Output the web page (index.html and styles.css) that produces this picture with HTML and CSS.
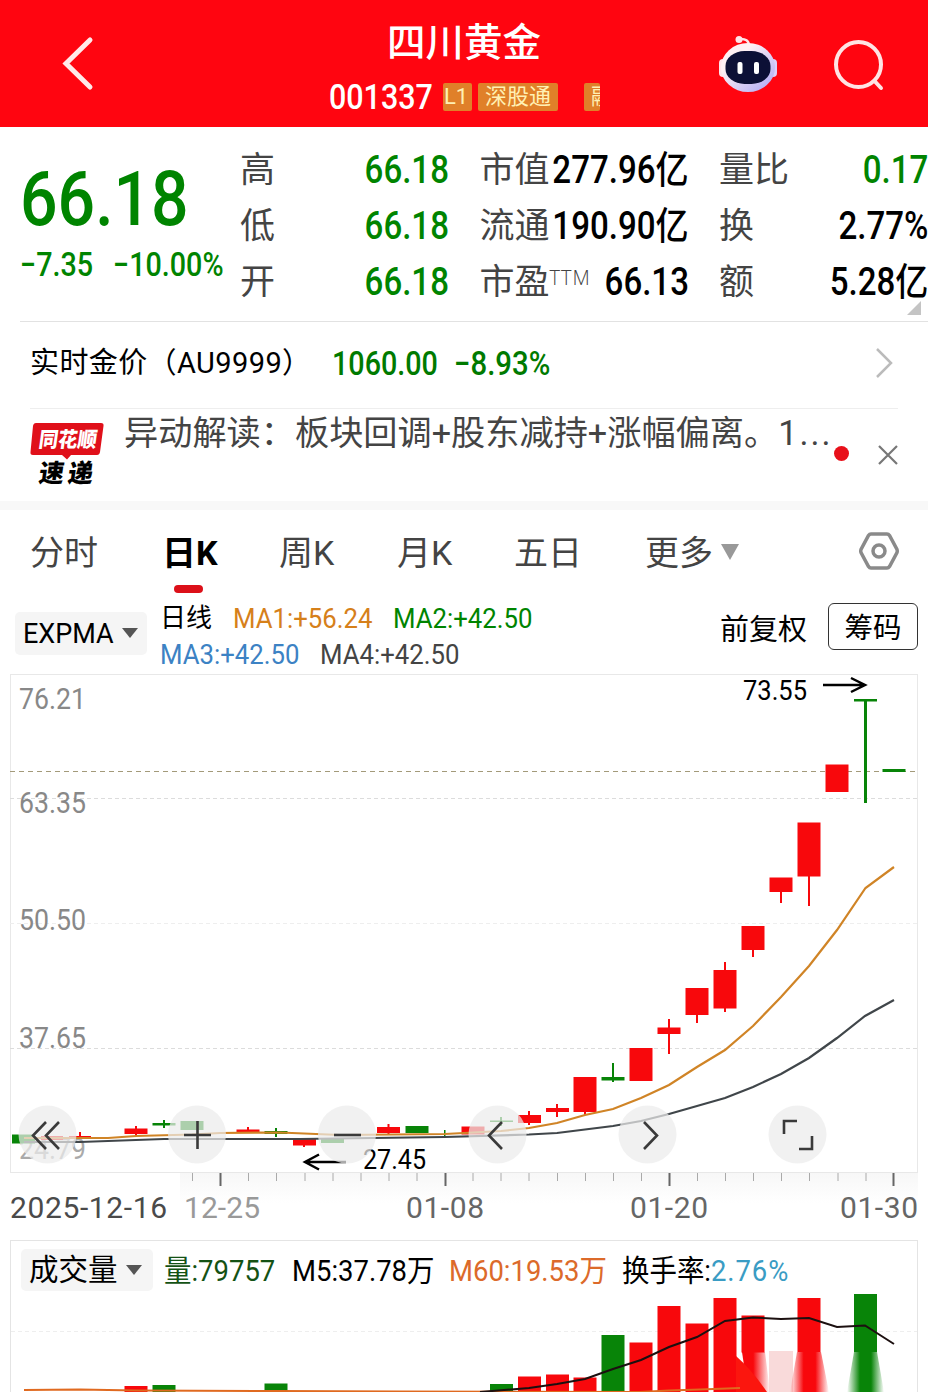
FILE: index.html
```html
<!DOCTYPE html>
<html lang="zh-CN">
<head>
    <meta charset="UTF-8">
    <meta name="viewport" content="width=device-width, initial-scale=1.0">
    <title>四川黄金 001337</title>
    <link rel="stylesheet" href="styles.css">
</head>
<body>
    <!-- Header -->
    <header class="header">
        <svg class="back" width="32" height="56" viewBox="0 0 32 56"><path d="M28 4L4 27.500L28 51" /></svg>
        <div class="title">
            <h1>四川黄金</h1>
            <div class="code-row">
                <span class="code num">001337</span>
                <span class="tag tag-level">L1</span>
                <span class="tag">深股通</span>
                <span class="tag tag-cut">融</span>
            </div>
        </div>
        <svg class="robot" width="60" height="60" viewBox="0 0 60 60">
            <defs>
                <linearGradient id="head" x1="0" y1="0" x2="1" y2="1">
                    <stop offset="0.3" stop-color="#fff0f4" />
                    <stop offset="1" stop-color="#a9a4f5" />
                </linearGradient>
            </defs>
            <path d="M21 4Q31 3 31 11" fill="none" stroke="#ffe4e8" stroke-width="2.500" />
            <circle cx="21" cy="4.500" r="3.500" fill="#ffe4e8" />
            <rect x="1" y="24" width="8" height="18" rx="4" fill="#ffe4ea" />
            <rect x="51" y="24" width="8" height="18" rx="4" fill="#dccffa" />
            <ellipse cx="30" cy="32.500" rx="27" ry="24.500" fill="url(#head)" />
            <rect x="7.500" y="16" width="45" height="33" rx="19" ry="15" fill="#0c1036" />
            <rect x="19.500" y="27" width="5" height="12" rx="2" fill="#fff" />
            <rect x="36" y="27" width="5" height="12" rx="2" fill="#fff" />
        </svg>
        <svg class="search" width="52" height="54" viewBox="0 0 52 54">
            <circle cx="25.500" cy="26.500" r="22.500" />
            <path d="M41.500 43L48 50" />
        </svg>
    </header>

    <!-- Quote -->
    <section class="quote">
        <div class="price">
            <div class="price-now num">66.18</div>
            <div class="price-change">
                <span class="num">−7.35</span>
                <span class="num">−10.00%</span>
            </div>
        </div>
        <div class="stats">
            <div class="stat"><span>高</span><b class="num green">66.18</b></div>
            <div class="stat"><span>市值</span><b class="num">277.96亿</b></div>
            <div class="stat"><span>量比</span><b class="num green">0.17</b></div>
            <div class="stat"><span>低</span><b class="num green">66.18</b></div>
            <div class="stat"><span>流通</span><b class="num">190.90亿</b></div>
            <div class="stat"><span>换</span><b class="num">2.77%</b></div>
            <div class="stat"><span>开</span><b class="num green">66.18</b></div>
            <div class="stat"><span>市盈<sup>TTM</sup></span><b class="num">66.13</b></div>
            <div class="stat"><span>额</span><b class="num">5.28亿</b></div>
        </div>
        <i class="corner"></i>
    </section>

    <!-- Gold price -->
    <section class="gold">
        <span class="gold-name">实时金价（AU9999）</span>
        <span class="gold-price num">1060.00</span>
        <span class="gold-change num">−8.93%</span>
        <svg class="more" width="18" height="32" viewBox="0 0 18 32"><path d="M2 2L16 16L2 30" /></svg>
    </section>

    <!-- News -->
    <section class="news">
        <svg class="logo" width="76" height="72" viewBox="0 0 76 72">
            <path d="M6 3H71Q74 3 73.500 6L70 32Q69.500 35 67 35H41L37 39.500L32 35H3Q0 35 0.500 32L3 6Q3.500 3 6 3Z" fill="#e0101a" />
            <text class="logo-top" transform="translate(8 27) skewX(-8)" textLength="58" lengthAdjust="spacingAndGlyphs">同花顺</text>
            <text class="logo-bottom" transform="translate(8 62) skewX(-8)" textLength="54">速递</text>
        </svg>
        <p class="news-text">异动解读：板块回调+股东减持+涨幅偏离。<span class="news-tail">1...</span></p>
        <i class="dot"></i>
        <svg class="close" width="22" height="22" viewBox="0 0 22 22"><path d="M2 2L20 20M20 2L2 20" /></svg>
    </section>

    <!-- Period tabs -->
    <nav class="tabs">
        <span>分时</span>
        <span class="active">日K</span>
        <span>周K</span>
        <span>月K</span>
        <span>五日</span>
        <span>更多<i class="caret"></i></span>
        <svg width="40" height="40" viewBox="0 0 40 40">
            <path d="M12 3H28Q29.500 3 30.500 4.500L38 18.500Q38.500 20 38 21.500L30.500 35.500Q29.500 37 28 37H12Q10.500 37 9.500 35.500L2 21.500Q1.500 20 2 18.500L9.500 4.500Q10.500 3 12 3Z" />
            <circle cx="20" cy="20" r="6" />
        </svg>
    </nav>

    <!-- Indicator row -->
    <section class="indicator">
        <span class="pill">EXPMA<i class="caret"></i></span>
        <div class="ma">
            <div class="ma-row">
                <span class="ma-name">日线</span>
                <span class="num orange">MA1:+56.24</span>
                <span class="num green">MA2:+42.50</span>
            </div>
            <div class="ma-row">
                <span class="num blue">MA3:+42.50</span>
                <span class="num gray">MA4:+42.50</span>
            </div>
        </div>
        <span class="adjust">前复权</span>
        <span class="chips">筹码</span>
    </section>

    <!-- Candle chart -->
    <svg class="chart" width="928" height="566" viewBox="0 674 928 566">
        <defs>
            <linearGradient id="shade" x1="0" y1="0" x2="0" y2="1">
                <stop offset="0" stop-color="#f7f7f7" />
                <stop offset="1" stop-color="#fff" />
            </linearGradient>
        </defs>
        <rect x="180" y="1173" width="738" height="30" fill="url(#shade)" />
        <rect class="frame" x="10.500" y="674.500" width="907" height="498" />
        <path class="grid" d="M10 798.500H917M10 1048.500H917" />
        <path class="grid light" d="M10 923.500H917" />
        <path class="now" d="M10 771.500H917" />

        <g class="axis">
            <text x="19" y="709" textLength="67" lengthAdjust="spacingAndGlyphs">76.21</text>
            <text x="19" y="813" textLength="67" lengthAdjust="spacingAndGlyphs">63.35</text>
            <text x="19" y="930" textLength="67" lengthAdjust="spacingAndGlyphs">50.50</text>
            <text x="19" y="1048" textLength="67" lengthAdjust="spacingAndGlyphs">37.65</text>
            <text class="faint" x="19" y="1159" textLength="67" lengthAdjust="spacingAndGlyphs">24.79</text>
        </g>

        <g class="up">
            <path d="M41 1136h22v4h-22zM69 1136h22v2h-22zM79 1132h2v7h-2z" />
            <path d="M124.500 1128.500h23v5.500h-23zM135 1126h2v11h-2z" />
            <path d="M236.500 1129.500h23v2.500h-23zM247 1127h2v5h-2z" />
            <path d="M293 1139h23v6.500h-23zM303 1139h2v8h-2z" />
            <path d="M377 1127h23v6h-23zM387.500 1124h2v11h-2z" />
            <path d="M461.500 1126.500h23v8h-23z" />
            <path d="M518 1115h23v8h-23zM528 1111h2v14h-2z" />
            <path d="M546 1108h23v4h-23zM556 1104h2v13h-2z" />
            <path d="M573.500 1077h23v35h-23zM584 1077h2v38h-2z" />
            <path d="M629.500 1048h23v33h-23z" />
            <path d="M657.500 1027.500h23v6.500h-23zM668 1019h2v35h-2z" />
            <path d="M685.500 988h23v27h-23zM696 988h2v35h-2z" />
            <path d="M713.500 970h23v38.500h-23zM724 962h2v50h-2z" />
            <path d="M741.500 926h23v24h-23zM752 926h2v31h-2z" />
            <path d="M769.500 877.500h23v14.500h-23zM780 878h2v25h-2z" />
            <path d="M797.500 822.500h23v54h-23zM808 823h2v83h-2z" />
            <path d="M825.500 764.500h23v27.500h-23z" />
        </g>
        <g class="down">
            <path d="M12 1134.500h23v9h-23z" />
            <path d="M152.500 1123h23v2.500h-23zM163 1120h2v8h-2z" />
            <path d="M180.500 1121h23v9h-23z" />
            <path d="M264.500 1131h23v3h-23zM275 1128h2v9h-2z" />
            <path d="M321 1139h23v4h-23z" />
            <path d="M405.500 1126h23v7h-23z" />
            <path d="M444 1130h1.500v8h-1.500z" />
            <path d="M490 1120.500h23v1.500h-23zM500 1117h2v9h-2z" />
            <path d="M601.500 1077h23v3.500h-23zM612 1063h2v19h-2z" />
            <path d="M854 699h23v2.500h-23zM864 700h3v103h-3z" />
            <path d="M882.500 769h23v3h-23z" />
        </g>

        <polyline class="ma-slow" points="24,1142 80,1142 164,1139 300,1139 445,1137 529,1134.500 557,1133 585,1129.500 613,1126 641,1121 669,1114 697,1106 725,1098 753,1087 781,1074 809,1058 837,1038 865,1016 894,1000" />
        <polyline class="ma-fast" points="24,1138 108,1138 136,1136 192,1134.500 220,1133 280,1132.500 340,1135 445,1134 501,1131 529,1128 557,1123 585,1115 613,1109 641,1098 669,1085 697,1067 725,1050 753,1026 781,997 809,966 837,930 865.500,888 894,867" />

        <g class="mark">
            <text x="743" y="700" textLength="64" lengthAdjust="spacingAndGlyphs">73.55</text>
            <path d="M823 685H864M851 678L865 685L851 692" />
            <text x="363" y="1169" textLength="63" lengthAdjust="spacingAndGlyphs">27.45</text>
            <path d="M346 1162H306M319 1154.500L305 1162L319 1169.500" />
        </g>

        <!-- Chart controls -->
        <g class="controls">
            <circle cx="47.500" cy="1134.500" r="29" />
            <circle cx="197" cy="1134.500" r="29" />
            <circle cx="347" cy="1134.500" r="29" />
            <circle cx="497.500" cy="1134.500" r="29" />
            <circle cx="647.500" cy="1134.500" r="29" />
            <circle cx="797.500" cy="1134.500" r="29" />
            <path d="M46 1122L33 1135.500L46 1149M59 1122L46 1135.500L59 1149" />
            <path d="M184 1135H211M197.500 1121V1149" />
            <path d="M334 1135H361" />
            <path d="M502 1122L489 1135.500L502 1149" />
            <path d="M644 1122L657 1135.500L644 1149" />
            <path d="M784 1134V1121H797M812 1136V1149H799" />
        </g>

        <path class="tick" d="M192.500 1173v8M248.500 1173v8M276.500 1173v8M305 1173v8M333 1173v8M361 1173v8M389 1173v8M417 1173v8M473 1173v8M501 1173v8M529 1173v8M557.500 1173v8M585.500 1173v8M613.500 1173v8M641.500 1173v8M697.500 1173v8M725.500 1173v8M753.500 1173v8M781.500 1173v8M809.500 1173v8M838 1173v8M866 1173v8" />
        <path class="tick major" d="M220.500 1173v13M445.500 1173v13M669.500 1173v13M893.500 1173v13" />
        <g class="dates">
            <text class="first" x="10" y="1218" textLength="157">2025-12-16</text>
            <text class="faint" x="184" y="1218" textLength="76">12-25</text>
            <text x="406" y="1218" textLength="78">01-08</text>
            <text x="630" y="1218" textLength="78">01-20</text>
            <text x="840" y="1218" textLength="78">01-30</text>
        </g>
    </svg>

    <!-- Volume -->
    <section class="volume">
        <div class="volume-head">
            <span class="pill">成交量<i class="caret"></i></span>
            <span class="num dark-green">量:79757</span>
            <span class="num">M5:37.78万</span>
            <span class="num deep-orange">M60:19.53万</span>
            <span class="num">换手率:<span class="cyan">2.76%</span></span>
        </div>
        <svg class="bars" width="906" height="98" viewBox="11 1294 906 98">
            <defs>
                <linearGradient id="red-fade">
                    <stop offset="0" stop-color="#f8080c" stop-opacity="0" />
                    <stop offset="0.350" stop-color="#f8080c" />
                    <stop offset="0.650" stop-color="#f8080c" />
                    <stop offset="1" stop-color="#f8080c" stop-opacity="0" />
                </linearGradient>
                <linearGradient id="green-fade">
                    <stop offset="0" stop-color="#088408" stop-opacity="0" />
                    <stop offset="0.350" stop-color="#088408" />
                    <stop offset="0.650" stop-color="#088408" />
                    <stop offset="1" stop-color="#088408" stop-opacity="0" />
                </linearGradient>
                <linearGradient id="right-fade">
                    <stop offset="0.400" stop-color="#f8080c" />
                    <stop offset="1" stop-color="#f8080c" stop-opacity="0" />
                </linearGradient>
            </defs>
            <path class="grid light" d="M11 1331.500H917" />
            <path class="up" d="M124.500 1386h23v6h-23zM518 1376.500h23v16h-23zM546 1374.500h23v18h-23zM573.500 1377.500h23v15h-23zM629.500 1342.500h23v50h-23zM657.500 1306h23v86h-23zM685.500 1323.500h23v69h-23zM713.500 1298h23v94h-23zM741.500 1315.500h23v37h-23zM797.500 1298h23v54h-23z" />
            <path class="down" d="M152.500 1385h23v7h-23zM264.500 1383.500h23v9h-23zM490 1384h23v8h-23zM601.500 1335h23v57h-23zM854 1294h23v58h-23z" />
            <rect x="769" y="1351" width="24" height="41" fill="#f9dada" />
            <path d="M742 1352H765L770 1392H748Z" fill="url(#right-fade)" />
            <path d="M736 1356Q752 1370 767 1392H736Z" fill="#fb160e" />
            <path d="M797 1352H821L829 1392H790Z" fill="url(#red-fade)" />
            <path d="M854 1352H877L884 1392H847Z" fill="url(#green-fade)" />
            <polyline class="vol-slow" points="24,1390 80,1389.500 136,1390.500 276,1391 400,1391.500 640,1392 669,1390.500 700,1389.500 740,1388" />
            <polyline class="vol-fast" points="480,1392 529,1388 557,1384 585,1379 613,1369 641,1360 669,1347 697,1337 725,1321 753,1317.500 781,1319 809,1318 837,1327 865,1325.500 894,1344" />
        </svg>
    </section>
</body>
</html>
```

FILE: styles.css
```css
* {
    box-sizing: border-box;
}

body {
    width: 928px;
    height: 1392px;
    margin: 0;
    overflow: hidden;
    background-color: #fff;
    color: #000;
    font-family: Roboto, "Noto Sans CJK SC", sans-serif;
}

svg {
    display: block;
    flex: none;
}

i {
    display: block;
    flex: none;
}

/* Narrow figures */
.num {
    display: inline-block;
    white-space: nowrap;
    transform: scaleX(0.87);
    transform-origin: left center;
}

.green { color: #008400; }
.orange { color: #d6801a; }
.blue { color: #3c82c4; }
.gray { color: #444; }
.dark-green { color: #145214; }
.deep-orange { color: #dc6a2a; }
.cyan { color: #3a9cc4; }

/* Header */
.header {
    display: flex;
    height: 127px;
    background-color: #ff0510;
    color: #fff;
}

.back {
    margin: 36px 0 0 62px;
    fill: none;
    stroke: #ffeaea;
    stroke-width: 5;
    stroke-linecap: round;
}

.title {
    width: 390px;
    margin-left: 235px;
}

h1 {
    margin: 19px 0 0 58px;
    font-size: 38.5px;
    font-weight: 500;
    line-height: 48px;
}

.code-row {
    display: flex;
    align-items: center;
    height: 30px;
    margin-top: 15px;
}

.code {
    width: 114px;
    font-size: 35px;
    font-weight: 500;
}

.tag {
    height: 28px;
    margin-right: 6px;
    padding: 0 7px;
    border-radius: 2px;
    background-color: #e08029;
    color: #fff0b4;
    font-size: 22px;
    line-height: 28px;
    white-space: nowrap;
    overflow: hidden;
}

.tag-level {
    width: 29px;
    padding: 0 1px;
}

.tag-cut {
    width: 16px;
    margin-left: 20px;
}

.robot {
    margin: 35px 0 0 -1px;
}

.search {
    margin: 38px 0 0 55px;
    fill: none;
    stroke: #ffe4e4;
    stroke-width: 4;
    stroke-linecap: round;
}

/* Quote */
.quote {
    display: flex;
    position: relative;
    height: 195px;
    padding-top: 15px;
}

.quote::after {
    content: "";
    position: absolute;
    left: 20px;
    right: 0;
    bottom: 0;
    height: 1px;
    background-color: #e2e2e2;
}

.price {
    width: 240px;
    padding-left: 20px;
    color: #008400;
}

.price-now {
    margin-top: 13px;
    font-size: 76px;
    font-weight: 500;
    line-height: 88px;
}

.price-change {
    display: grid;
    grid-template-columns: 93px auto;
    font-size: 33px;
    font-weight: 500;
    line-height: 44px;
}

.stats {
    display: grid;
    grid-template-columns: 209px 209px 209px;
    grid-auto-rows: 56px;
    column-gap: 30.500px;
}

.stat {
    display: flex;
    justify-content: space-between;
    color: #444;
    font-size: 35px;
    line-height: 57px;
    white-space: nowrap;
}

.stat > span {
    width: 70px;
}

.stat b {
    margin-left: -30px;
    color: #000;
    font-size: 38px;
    font-weight: 500;
    transform-origin: right center;
}

.stat b.green {
    color: #008400;
}

sup {
    font-family: "Open Sans", sans-serif;
    font-size: 20px;
    font-weight: 300;
    letter-spacing: 1px;
    line-height: 0;
    vertical-align: 9px;
}

.corner {
    position: absolute;
    right: 7px;
    bottom: 7px;
    border-left: 14px solid transparent;
    border-bottom: 14px solid #c4c4c4;
}

/* Gold price */
.gold {
    display: flex;
    align-items: center;
    height: 87px;
    margin: 0 30px;
    padding-bottom: 4px;
    border-bottom: 1px solid #eee;
    font-size: 29px;
}

.gold-name {
    width: 302px;
    padding-bottom: 6px;
    letter-spacing: 0.4px;
    white-space: nowrap;
}

.gold-price,
.gold-change {
    color: #007a00;
    font-size: 33px;
    font-weight: 500;
}

.gold-price {
    width: 122px;
}

.gold-change {
    transform: scaleX(0.89);
}

.more {
    margin-left: auto;
    margin-right: 5px;
    fill: none;
    stroke: #bbb;
    stroke-width: 2.5;
}

/* News */
.news {
    display: flex;
    height: 101px;
    padding-left: 30px;
    border-bottom: 9px solid #f8f8f8;
}

.logo {
    margin-top: 11px;
}

.logo-top,
.logo-bottom {
    font-family: "Noto Sans CJK SC", sans-serif;
    font-weight: 900;
}

.logo-top {
    fill: #fff;
    font-size: 21px;
}

.logo-bottom {
    fill: #000;
    font-size: 25px;
}

.news-text {
    width: 710px;
    margin: 0 0 0 18px;
    color: #444;
    font-size: 34.2px;
    line-height: 49px;
    white-space: nowrap;
}

.news-tail {
    letter-spacing: 2px;
}

.dot {
    width: 15px;
    height: 15px;
    margin: 37px 0 0 0;
    border-radius: 50%;
    background-color: #e8101a;
}

.close {
    margin: 35px 0 0 28px;
    fill: none;
    stroke: #777;
    stroke-width: 2.2;
}

/* Period tabs */
.tabs {
    display: grid;
    grid-template-columns: 132px 117px 118px 117px 131px 214px 40px;
    height: 85px;
    padding-left: 30px;
    color: #444;
    font-size: 34px;
    line-height: 86px;
}

.tabs span {
    white-space: nowrap;
}

.tabs .active {
    position: relative;
    color: #000;
    font-weight: 700;
}

.tabs .active::after {
    content: "";
    position: absolute;
    left: 12px;
    bottom: 3px;
    width: 29px;
    height: 8px;
    border-radius: 4px;
    background-color: #dc1019;
}

.tabs svg {
    margin-top: 21px;
    fill: none;
    stroke: #8a8a8a;
    stroke-width: 3.5;
}

.caret {
    display: inline-block;
    margin-left: 8px;
    border: 8px solid transparent;
    border-top: 10px solid #555;
    border-bottom: 0;
    vertical-align: 5px;
}

.tabs .caret {
    border-width: 16px 9px 0;
    border-top-color: #999;
    vertical-align: 5px;
}

/* Indicator row */
.indicator {
    display: flex;
    height: 79px;
    padding-left: 15px;
}

.pill {
    border-radius: 5px;
    background-color: #f5f5f5;
    white-space: nowrap;
}

.indicator .pill {
    width: 132px;
    height: 43px;
    margin-top: 17px;
    padding-left: 8px;
    font-size: 27px;
    line-height: 45px;
}

.ma {
    width: 560px;
    margin: 6px 0 0 13px;
    font-size: 28px;
    line-height: 36px;
}

.ma-row {
    display: flex;
    height: 36px;
}

.ma .num {
    width: 160px;
    flex: none;
    transform: scaleX(0.92);
}

.ma-name {
    width: 73px;
    font-size: 26px;
    line-height: 34px;
}

.adjust {
    font-size: 29px;
    line-height: 71px;
    white-space: nowrap;
}

.chips {
    width: 90px;
    height: 47px;
    margin: 8px 0 0 21px;
    border: 1px solid #333;
    border-radius: 6px;
    font-size: 28.5px;
    line-height: 49px;
    text-align: center;
}

/* Candle chart */
.frame {
    fill: none;
    stroke: #e8e8e8;
}

.grid {
    fill: none;
    stroke: #dcdcdc;
    stroke-dasharray: 4 3;
}

.light {
    stroke: #eee;
}

.now {
    fill: none;
    stroke: #a39a7a;
    stroke-dasharray: 5 4;
}

.up { fill: #f8080c; }
.down { fill: #088408; }

.chart text {
    font-size: 29px;
}

.axis text { fill: #888; }
.axis .faint { fill: #aaa; }

.chart .mark text {
    font-size: 27px;
}

.mark path {
    fill: none;
    stroke: #000;
    stroke-width: 2.5;
}

.ma-fast,
.ma-slow {
    fill: none;
    stroke-width: 2.2;
}

.ma-fast { stroke: #d08426; }
.ma-slow { stroke: #40464a; }

.controls circle {
    fill: #ececec;
    fill-opacity: 0.72;
}

.controls path {
    fill: none;
    stroke: #3a3a3a;
    stroke-width: 2.6;
}

.tick {
    stroke: #aaa;
}

.major {
    stroke: #666;
    stroke-width: 2;
}

.chart .dates text {
    fill: #666;
    font-size: 30px;
}

.chart .dates .first { fill: #4a4a4a; }
.chart .dates .faint { fill: #999; }

/* Volume */
.volume {
    height: 152px;
    margin: 0 10px;
    border: 1px solid #e4e4e4;
    border-bottom: 0;
}

.volume-head {
    display: grid;
    grid-template-columns: 143px 128px 157px 173px auto;
    height: 53px;
    padding-left: 10px;
    font-size: 30px;
    line-height: 59px;
}

.volume-head .pill {
    width: 132px;
    height: 42px;
    margin-top: 8px;
    padding-left: 8px;
    font-size: 29.5px;
    line-height: 43px;
}

.volume-head .num {
    transform: scaleX(0.915);
}

.volume-head .num .cyan {
    display: inline;
    letter-spacing: 1px;
}

.vol-fast,
.vol-slow {
    fill: none;
    stroke: #1c1010;
    stroke-width: 2;
}

.vol-slow {
    stroke: #e06a20;
}
```
